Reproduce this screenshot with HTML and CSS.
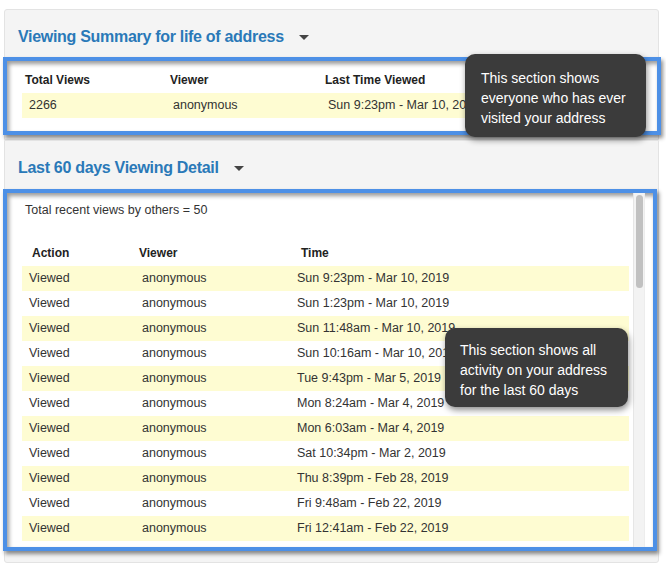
FILE: index.html
```html
<!DOCTYPE html>
<html>
<head>
<meta charset="utf-8">
<link rel="stylesheet" href="styles.css">
</head>
<body>
<div class="page">
  <section class="panel panel-summary">
    <div class="panel-head">
      <span class="panel-title">Viewing Summary for life of address</span>
      <span class="caret"></span>
    </div>
    <div class="callout callout-summary">
      <div class="summary-table">
        <div class="row head">
          <div class="c1">Total Views</div>
          <div class="c2">Viewer</div>
          <div class="c3">Last Time Viewed</div>
        </div>
        <div class="row odd">
          <div class="c1">2266</div>
          <div class="c2">anonymous</div>
          <div class="c3">Sun 9:23pm - Mar 10, 2019</div>
        </div>
      </div>
    </div>
  </section>

  <section class="panel panel-detail">
    <div class="panel-head">
      <span class="panel-title">Last 60 days Viewing Detail</span>
      <span class="caret"></span>
    </div>
    <div class="callout callout-detail">
      <div class="list">
        <div class="total">Total recent views by others = 50</div>
        <div class="detail-table">
          <div class="row head">
            <div class="c1">Action</div>
            <div class="c2">Viewer</div>
            <div class="c3">Time</div>
          </div>
          <div class="row odd"><div class="c1">Viewed</div><div class="c2">anonymous</div><div class="c3">Sun 9:23pm - Mar 10, 2019</div></div>
          <div class="row"><div class="c1">Viewed</div><div class="c2">anonymous</div><div class="c3">Sun 1:23pm - Mar 10, 2019</div></div>
          <div class="row odd"><div class="c1">Viewed</div><div class="c2">anonymous</div><div class="c3">Sun 11:48am - Mar 10, 2019</div></div>
          <div class="row"><div class="c1">Viewed</div><div class="c2">anonymous</div><div class="c3">Sun 10:16am - Mar 10, 2019</div></div>
          <div class="row odd"><div class="c1">Viewed</div><div class="c2">anonymous</div><div class="c3">Tue 9:43pm - Mar 5, 2019</div></div>
          <div class="row"><div class="c1">Viewed</div><div class="c2">anonymous</div><div class="c3">Mon 8:24am - Mar 4, 2019</div></div>
          <div class="row odd"><div class="c1">Viewed</div><div class="c2">anonymous</div><div class="c3">Mon 6:03am - Mar 4, 2019</div></div>
          <div class="row"><div class="c1">Viewed</div><div class="c2">anonymous</div><div class="c3">Sat 10:34pm - Mar 2, 2019</div></div>
          <div class="row odd"><div class="c1">Viewed</div><div class="c2">anonymous</div><div class="c3">Thu 8:39pm - Feb 28, 2019</div></div>
          <div class="row"><div class="c1">Viewed</div><div class="c2">anonymous</div><div class="c3">Fri 9:48am - Feb 22, 2019</div></div>
          <div class="row odd"><div class="c1">Viewed</div><div class="c2">anonymous</div><div class="c3">Fri 12:41am - Feb 22, 2019</div></div>
        </div>
      </div>
      <div class="scrollbar"><div class="thumb"></div></div>
    </div>
  </section>
</div>

<div class="tip tip-summary">This section shows everyone who has ever visited your address</div>
<div class="tip tip-detail">This section shows all activity on your address for the last 60 days</div>
</body>
</html>
```

FILE: styles.css
```css
* { box-sizing: border-box; }

html, body {
  margin: 0;
  padding: 0;
  background: #ffffff;
  font-family: "Liberation Sans", Arial, Helvetica, sans-serif;
  color: #333333;
}

.page {
  padding: 9px 0 0 4px;
}

.panel {
  width: 655px;
  background: #f4f4f4;
  border: 1px solid #e3e3e3;
}

.panel-summary {
  border-radius: 3px 3px 0 0;
  padding-bottom: 4px;
}

.panel-detail {
  border-radius: 0 0 3px 3px;
  padding-bottom: 11px;
}

.panel-head {
  display: flex;
  align-items: center;
  padding-left: 13px;
}

.panel-summary .panel-head {
  height: 47px;
  padding-top: 7px;
}

.panel-detail .panel-head {
  height: 48px;
  padding-top: 6px;
}

.panel-title {
  font-size: 16px;
  font-weight: bold;
  letter-spacing: -0.3px;
  color: #2a79b8;
}

.caret {
  width: 0;
  height: 0;
  margin-left: 15px;
  margin-top: 1px;
  border-left: 5px solid transparent;
  border-right: 5px solid transparent;
  border-top: 5px solid #444444;
}

.callout {
  margin-left: -2px;
  background: #ffffff;
  border: 4px solid #4d90e6;
  box-shadow: 2px 3px 4px rgba(0, 0, 0, 0.45), inset 2px 3px 4px rgba(0, 0, 0, 0.4);
}

.callout-summary {
  width: 658px;
  height: 78px;
  padding: 7px 0 0 15px;
}

.callout-detail {
  width: 654px;
  height: 362px;
  display: flex;
  overflow: hidden;
}

.row {
  display: grid;
  height: 25px;
  line-height: 25px;
  font-size: 12.5px;
  color: #333333;
  white-space: nowrap;
}

.row > div {
  padding-left: 7px;
  overflow: hidden;
}

.row.odd {
  background: #fefcd2;
}

.row.head {
  font-size: 12px;
  font-weight: bold;
  color: #222222;
}

.summary-table {
  width: 607px;
}

.summary-table .row {
  grid-template-columns: 144px 155px 1fr;
}

.summary-table .row.head .c1 { padding-left: 3px; }
.summary-table .row.head .c2 { padding-left: 4px; }
.summary-table .row.head .c3 { padding-left: 4px; }

.list {
  flex: 0 0 622px;
  padding: 9px 0 0 15px;
  overflow: hidden;
}

.total {
  font-size: 12.5px;
  line-height: 16px;
  color: #333333;
  padding-left: 3px;
  margin-bottom: 23px;
}

.detail-table {
  width: 607px;
}

.detail-table .row {
  grid-template-columns: 113px 155px 1fr;
}

.detail-table .row.head .c1 { padding-left: 10px; }
.detail-table .row.head .c2 { padding-left: 4px; }
.detail-table .row.head .c3 { padding-left: 11px; }

.scrollbar {
  flex: 0 0 12px;
  margin-left: 4px;
  background: #f3f3f3;
  border-left: 1px solid #e6e6e6;
  border-right: 1px solid #ededed;
  padding: 2px 0 0 2px;
}

.thumb {
  width: 7px;
  height: 93px;
  border-radius: 4px;
  background: #c1c1c1;
}

.tip {
  position: absolute;
  background: #3b3b3b;
  color: #ffffff;
  font-size: 14px;
  line-height: 20px;
  border-radius: 10px;
  box-shadow: 1px 3px 6px rgba(0, 0, 0, 0.45);
}

.tip-summary {
  left: 465px;
  top: 54px;
  width: 181px;
  height: 83px;
  padding: 14px 10px 0 16px;
}

.tip-detail {
  left: 445px;
  top: 328px;
  width: 183px;
  height: 79px;
  padding: 12px 10px 0 15px;
}
```
